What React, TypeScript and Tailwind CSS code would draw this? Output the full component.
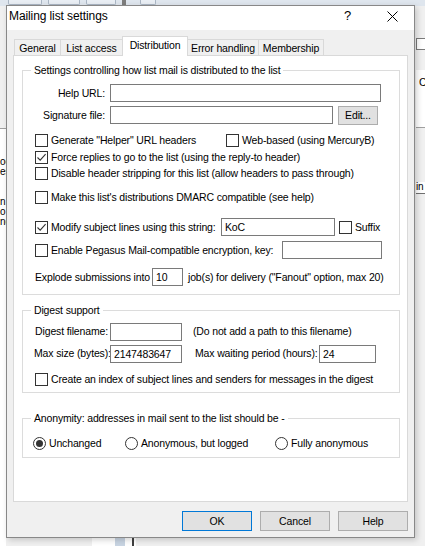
import React from "react";

type CheckProps = {
  label: string;
  checked?: boolean;
  className?: string;
};

const CheckBox = ({ checked }: { checked?: boolean }) => (
  <span className="flex h-[13px] w-[13px] shrink-0 items-center justify-center border border-[#333333] bg-white">
    {checked && (
      <svg width="11" height="11" viewBox="0 0 11 11">
        <path d="M1.5 5.5 L4.2 8.2 L9.6 2.2" fill="none" stroke="#333333" strokeWidth="1.1" />
      </svg>
    )}
  </span>
);

const Check = ({ label, checked, className = "" }: CheckProps) => (
  <label className={`flex items-center gap-[3px] whitespace-nowrap ${className}`}>
    <CheckBox checked={checked} />
    <span>{label}</span>
  </label>
);

const Radio = ({ label, checked, className = "" }: CheckProps) => (
  <label className={`flex items-center gap-[3px] whitespace-nowrap ${className}`}>
    <span className="flex h-[13px] w-[13px] shrink-0 items-center justify-center rounded-full border border-[#333333] bg-white">
      {checked && <span className="h-[7px] w-[7px] rounded-full bg-[#333333]" />}
    </span>
    <span>{label}</span>
  </label>
);

const Field = ({ value = "", className = "" }: { value?: string; className?: string }) => (
  <input
    readOnly
    value={value}
    className={`h-[18px] shrink-0 border border-[#7a7a7a] bg-white px-[3px] text-[10.5px] leading-[16px] tracking-[-0.15px] outline-none ${className}`}
  />
);

const Group = ({ title, className = "", children }: { title: string; className?: string; children: React.ReactNode }) => (
  <fieldset className={`w-[378px] border border-[#dcdcdc] p-0 ${className}`}>
    <legend className="ml-[8px] px-[3px] leading-[14px]">{title}</legend>
    {children}
  </fieldset>
);

const Tab = ({ label, active, width }: { label: string; active?: boolean; width: string }) =>
  active ? (
    <div className={`relative z-10 -ml-px flex h-[20px] items-center justify-center border border-b-0 border-[#d9d9d9] bg-white pb-[2px] ${width}`}>
      {label}
    </div>
  ) : (
    <div className={`-ml-px flex h-[17px] items-center justify-center border border-b-0 border-[#d9d9d9] bg-[#f0f0f0] first:ml-0 ${width}`}>
      {label}
    </div>
  );

const Button = ({ label, primary }: { label: string; primary?: boolean }) => (
  <button
    className={`flex h-[20px] w-[70px] items-center justify-center border bg-[#e1e1e1] ${
      primary ? "border-[#0078d7]" : "border-[#adadad]"
    }`}
  >
    {label}
  </button>
);

export default function App() {
  return (
    <div className="relative h-[546px] w-[425px] overflow-hidden bg-[#f0f0f0] font-['Liberation_Sans',Arial,sans-serif] text-[10.5px] leading-[13px] tracking-[-0.15px] text-black">
      {/* main window peeking out behind the dialog */}
      <div className="absolute left-0 top-0 flex h-[6px] w-[425px] gap-[6px] bg-[#dfe6ee] pl-[8px]">
        <div className="h-[5px] w-[34px] rounded-b-[2px] border border-t-0 border-[#aab6c4] bg-[#e9eef4]" />
        <div className="h-[5px] w-[32px] rounded-b-[2px] border border-t-0 border-[#aab6c4] bg-[#e9eef4]" />
        <div className="h-[5px] w-[30px] rounded-b-[2px] border border-t-0 border-[#aab6c4] bg-[#e9eef4]" />
        <div className="h-[6px] w-[4px] bg-[#7d7d7d]" />
        <div className="ml-[8px] h-[5px] w-[16px] rounded-b-[2px] border border-t-0 border-[#aab6c4] bg-[#e9eef4]" />
      </div>
      <div className="absolute left-0 top-[128px] h-[418px] w-[6px] border-t border-[#a0a0a0] bg-white text-[10px] leading-[10px]">
        <div className="mt-[28px]">oc</div>
        <div>es</div>
        <div className="mt-[20px]">n</div>
        <div>o</div>
        <div>nc</div>
      </div>
      <div className="absolute left-[416px] top-[38px] h-[12px] w-[12px] border border-[#7a7a7a] bg-white" />
      <div className="absolute left-[416px] top-[70px] h-[58px] w-[12px] border-b border-[#a0a0a0] bg-white pl-[3px] pt-[6px]">C</div>
      <div className="absolute left-[416px] top-[182px] h-[12px] w-[12px] border-b border-[#707070] bg-white text-[10px] leading-[10px]">in</div>
      <div className="absolute left-[92px] top-[537px] flex h-[9px] w-[44px] bg-white">
        <div className="ml-[23px] h-[9px] w-[10px] bg-[#c8d4e2]" />
        <div className="ml-[7px] h-[9px] w-[2px] bg-[#404040]" />
      </div>

      {/* dialog */}
      <div className="absolute left-[6px] top-[5px] flex h-[533px] w-[409px] flex-col border border-[#888888] bg-[#f0f0f0] shadow-[2px_2px_6px_rgba(0,0,0,0.18)]">
        <div className="flex h-[24px] items-start bg-white pt-[3px]">
          <span className="ml-[2px] text-[12px] leading-[14px] tracking-[-0.1px]">Mailing list settings</span>
          <span className="ml-auto text-[13px] leading-[14px]">?</span>
          <svg className="ml-[36px] mr-[16px] mt-[2px]" width="11" height="11" viewBox="0 0 11 11">
            <path d="M0.5 0.5 L10.5 10.5 M10.5 0.5 L0.5 10.5" stroke="#000" strokeWidth="1" />
          </svg>
        </div>

        <div className="flex flex-1 flex-col px-[6px] pb-[6px] pt-[6px]">
          <div className="ml-[1px] flex h-[20px] items-end">
            <Tab label="General" width="w-[47px]" />
            <Tab label="List access" width="w-[63px]" />
            <Tab label="Distribution" width="w-[66px]" active />
            <Tab label="Error handling" width="w-[72px]" />
            <Tab label="Membership" width="w-[66px]" />
          </div>

          <div className="-mt-px h-[447px] border border-[#d9d9d9] bg-white pl-[8px]">
            <Group title="Settings controlling how list mail is distributed to the list" className="mt-[7px]">
              <div className="pb-[8px] pl-[12px]">
                <div className="mt-[7px] flex h-[18px] items-center gap-[5px]">
                  <span className="w-[70px] text-right">Help URL:</span>
                  <Field className="w-[271px]" />
                </div>
                <div className="mt-[4px] flex h-[18px] items-center gap-[5px]">
                  <span className="w-[70px] text-right">Signature file:</span>
                  <Field className="h-[17px] w-[223px]" />
                  <button className="flex h-[19px] w-[40px] items-center justify-center border border-[#adadad] bg-[#e1e1e1]">
                    Edit...
                  </button>
                </div>
                <div className="mt-[8px] flex h-[16px] items-center">
                  <Check label={'Generate "Helper" URL headers'} className="w-[191px]" />
                  <Check label="Web-based (using MercuryB)" />
                </div>
                <div className="mt-[1px] flex h-[16px] items-center">
                  <Check label="Force replies to go to the list (using the reply-to header)" checked />
                </div>
                <div className="flex h-[16px] items-center">
                  <Check label="Disable header stripping for this list (allow headers to pass through)" />
                </div>
                <div className="mt-[8px] flex h-[16px] items-center">
                  <Check label="Make this list's distributions DMARC compatible (see help)" />
                </div>
                <div className="mt-[13px] flex h-[18px] items-center">
                  <Check label="Modify subject lines using this string:" checked className="w-[186px]" />
                  <Field value="KoC" className="h-[17px] w-[114px]" />
                  <Check label="Suffix" className="ml-[4px]" />
                </div>
                <div className="mt-[5px] flex h-[18px] items-center">
                  <Check label="Enable Pegasus Mail-compatible encryption, key:" className="w-[247px]" />
                  <Field className="w-[100px]" />
                </div>
                <div className="mt-[9px] flex h-[18px] items-center">
                  <span className="w-[117px] whitespace-nowrap">Explode submissions into</span>
                  <Field value="10" className="w-[31px]" />
                  <span className="ml-[5px] whitespace-nowrap">job(s) for delivery ("Fanout" option, max 20)</span>
                </div>
              </div>
            </Group>

            <Group title="Digest support" className="mt-[8px]">
              <div className="pb-[5px] pl-[11px]">
                <div className="mt-[6px] flex h-[17px] items-center">
                  <span className="w-[74px] whitespace-nowrap text-right">Digest filename:</span>
                  <Field className="ml-[2px] h-[17px] w-[72px]" />
                  <span className="ml-[11px] whitespace-nowrap">(Do not add a path to this filename)</span>
                </div>
                <div className="mt-[5px] flex h-[17px] items-center">
                  <span className="w-[74px] whitespace-nowrap text-right">Max size (bytes):</span>
                  <Field value="2147483647" className="ml-[2px] h-[17px] w-[72px]" />
                  <span className="ml-[13px] w-[124px] whitespace-nowrap">Max waiting period (hours):</span>
                  <Field value="24" className="h-[17px] w-[57px]" />
                </div>
                <div className="mt-[9px] flex h-[16px] items-center">
                  <Check label="Create an index of subject lines and senders for messages in the digest" className="ml-[1px]" />
                </div>
              </div>
            </Group>

            <Group title="Anonymity: addresses in mail sent to the list should be -" className="mt-[18px]">
              <div className="mt-[10px] flex h-[16px] items-center pb-0 pl-[10px]">
                <Radio label="Unchanged" checked className="w-[92px]" />
                <Radio label="Anonymous, but logged" className="w-[150px]" />
                <Radio label="Fully anonymous" />
              </div>
              <div className="h-[6px]" />
            </Group>
          </div>

          <div className="mt-[9px] flex justify-end gap-[8px]">
            <Button label="OK" primary />
            <Button label="Cancel" />
            <Button label="Help" />
          </div>
        </div>
      </div>
    </div>
  );
}
